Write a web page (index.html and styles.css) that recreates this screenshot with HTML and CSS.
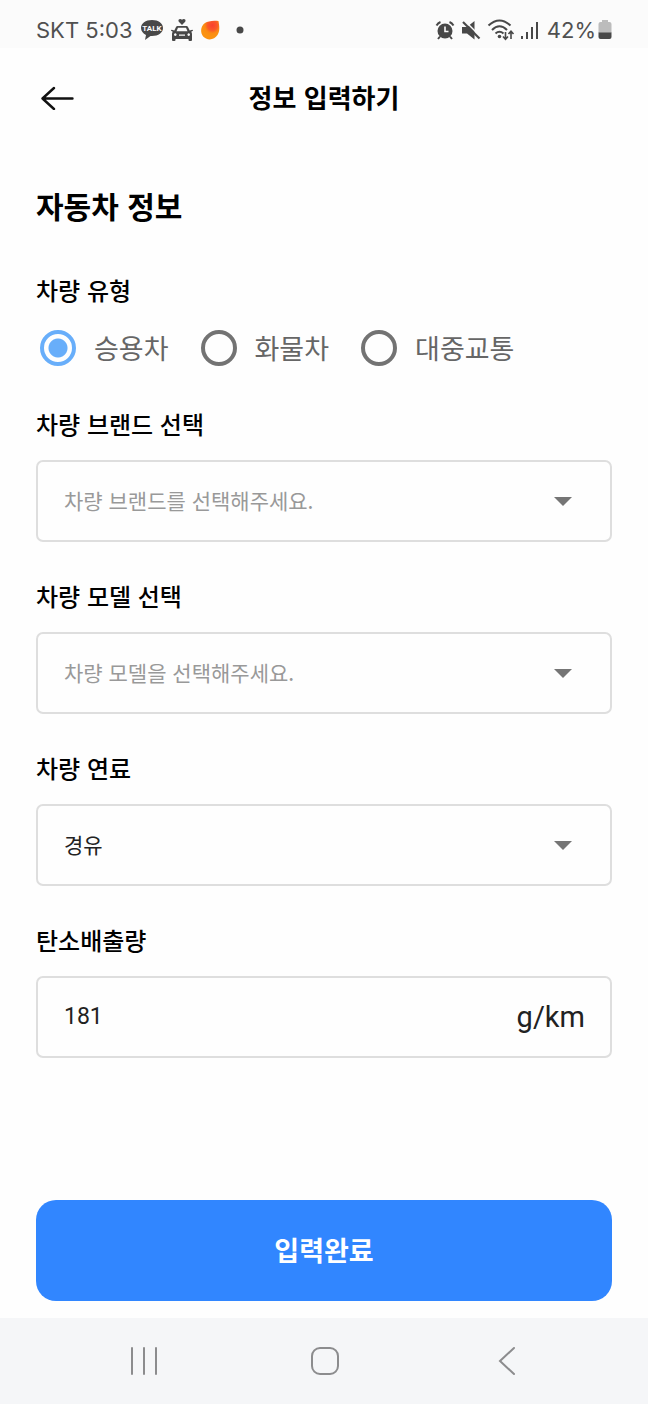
FILE: index.html
```html
<!DOCTYPE html>
<html lang="ko">
<head>
<meta charset="utf-8">
<meta name="viewport" content="width=device-width, initial-scale=1">
<title>정보 입력하기</title>
<link rel="stylesheet" href="styles.css">
</head>
<body class="app">
<div class="status">
  <div class="status-group">
    <span class="status-text">SKT 5:03</span>
    <svg class="status-talk" width="24" height="24" viewBox="0 0 24 24" aria-hidden="true">
      <path fill="#484848" d="M12 2C5.500 2 1 5.400 1 10c0 3 2 5.500 5 6.900L5 22l5.500-4H12c6.500 0 11-3.500 11-8s-4.500-8-11-8z"/>
      <text class="talk-word" x="12" y="13" text-anchor="middle">TALK</text>
    </svg>
    <svg width="24" height="24" viewBox="0 0 24 24" aria-hidden="true">
      <path fill="#484848" d="M12 7 8.800 3.800C7.500 2 9.900 0 12 1.800 14.100 0 16.500 2 15.200 3.800z"/>
      <path fill="#484848" fill-rule="evenodd" d="M7.500 8h9q1 0 1.500 1l1.700 3.500 2.500-.8q.8 0 .8 1l-1.800 1.100q.8.900.8 2.200v6q0 1-1 1h-1.500q-1 0-1-1v-1h-13v1q0 1-1 1H3q-1 0-1-1v-6q0-1.300.8-2.200L1 12.700q0-1 .8-1l2.500.8L6 9q.500-1 1.500-1zM8 9.700 6.500 13.200h11L16 9.700zM5.300 15.300a1.300 1.300 0 1 0 .01 0zM18.700 15.300a1.300 1.300 0 1 0 .01 0zM9 16.500v1.300h6v-1.300z"/>
    </svg>
    <svg class="status-peach" width="20" height="22" viewBox="0 0 20 22" aria-hidden="true">
      <defs>
        <radialGradient id="peach" cx="0.620" cy="0.250" r="0.600">
          <stop offset="0" stop-color="#f9402f"/>
          <stop offset="0.450" stop-color="#fa5a28"/>
          <stop offset="0.700" stop-color="#fb8a12"/>
          <stop offset="1" stop-color="#fb9210"/>
        </radialGradient>
      </defs>
      <path fill="url(#peach)" d="M9 2.500c3-1 6-1 9.500-.5C19.500 8 20 12 17.500 16 15 20 10 21.500 6 19.500 1.500 17.500 0 12 2 7.500 3.500 4.500 6 3 9 2.500z"/>
    </svg>
    <svg width="8" height="8" viewBox="0 0 8 8" aria-hidden="true"><circle cx="4" cy="4" r="3.500" fill="#484848"/></svg>
  </div>
  <div class="status-group">
    <svg width="20" height="20" viewBox="0 0 20 20" fill="none" stroke="#484848" stroke-width="2" aria-hidden="true">
      <circle cx="10" cy="11" r="7.500" fill="#484848" stroke="none"/>
      <path d="M1.500 5.500Q3 3 5.500 2M18.500 5.500Q17 3 14.500 2M5 16.500 3 19M15 16.500l2 2.500"/>
      <path stroke="#fcfcfc" stroke-width="1.600" d="M10 6.500v5h3.500"/>
    </svg>
    <svg width="20" height="20" viewBox="0 0 20 20" aria-hidden="true">
      <path fill="#484848" d="M1 7h5l7.500-6v18.500L6 13.500H1z"/>
      <path stroke="#fcfcfc" stroke-width="1.500" d="M4 1 19.500 16.500"/>
      <path stroke="#484848" stroke-width="2.200" d="M2 2l16.500 16.500"/>
    </svg>
    <svg width="28" height="24" viewBox="0 0 28 24" fill="none" stroke="#484848" stroke-width="2" aria-hidden="true">
      <path d="M1.500 7.500Q12.500-2.500 23.500 7.500M5 12Q12.500 4.500 20 12M8.500 15.500q4-3.500 8 0"/>
      <circle cx="12.500" cy="18.500" r="1.800" fill="#484848" stroke="none"/>
      <path stroke-width="1.600" d="M18.500 14v7M16 18.500l2.500 2.800 2.500-2.800M24 21v-7.500M21.500 16l2.500-2.800 2.500 2.800"/>
    </svg>
    <svg class="status-signal" width="18" height="20" viewBox="0 0 18 20" fill="#484848" aria-hidden="true">
      <path d="M0 16h2v3H0zM5 12h2v7H5zM10 7h2v12h-2zM15 2h2v17h-2z"/>
    </svg>
    <span class="status-text">42%</span>
    <svg class="status-battery" width="14" height="20" viewBox="0 0 14 20" aria-hidden="true">
      <path fill="#bcbcbc" d="M4 0h6v2h1.500Q13.500 2 13.500 4v9H.5V4Q.5 2 2.500 2H4z"/>
      <path fill="#484848" d="M.5 12.500h13V17q0 2-2 2h-9q-2 0-2-2z"/>
    </svg>
  </div>
</div>

<header class="topbar">
  <button class="back" type="button" aria-label="뒤로">
    <svg width="36" height="24" viewBox="0 0 36 24" fill="none" stroke="#111" stroke-width="2.400" stroke-linecap="round" stroke-linejoin="round" aria-hidden="true"><path d="M32.500 12.500H2.500M14 2 2.500 12.500 14 23"/></svg>
  </button>
  <h1 class="title">정보 입력하기</h1>
</header>

<form class="form">
  <h2 class="heading">자동차 정보</h2>
  <fieldset class="types">
    <legend class="label">차량 유형</legend>
    <div class="options">
      <label class="option"><input class="radio" type="radio" name="type" checked>승용차</label>
      <label class="option"><input class="radio" type="radio" name="type">화물차</label>
      <label class="option"><input class="radio" type="radio" name="type">대중교통</label>
    </div>
  </fieldset>
  <div class="field">
    <label class="label" for="brand">차량 브랜드 선택</label>
    <div class="box">
      <select class="control placeholder" id="brand"><option>차량 브랜드를 선택해주세요.</option></select>
      <svg class="caret" width="18" height="9" viewBox="0 0 18 9" aria-hidden="true"><path fill="#757575" d="M0 0h18L9 9z"/></svg>
    </div>
  </div>
  <div class="field">
    <label class="label" for="model">차량 모델 선택</label>
    <div class="box">
      <select class="control placeholder" id="model"><option>차량 모델을 선택해주세요.</option></select>
      <svg class="caret" width="18" height="9" viewBox="0 0 18 9" aria-hidden="true"><path fill="#757575" d="M0 0h18L9 9z"/></svg>
    </div>
  </div>
  <div class="field">
    <label class="label" for="fuel">차량 연료</label>
    <div class="box">
      <select class="control" id="fuel"><option>경유</option></select>
      <svg class="caret" width="18" height="9" viewBox="0 0 18 9" aria-hidden="true"><path fill="#757575" d="M0 0h18L9 9z"/></svg>
    </div>
  </div>
  <div class="field">
    <label class="label" for="carbon">탄소배출량</label>
    <div class="box">
      <input class="control number" id="carbon" type="text" inputmode="numeric" value="181">
      <span class="unit">g/km</span>
    </div>
  </div>
  <button class="submit" type="submit">입력완료</button>
</form>

<nav class="navbar">
  <button class="nav-button" type="button" aria-label="최근 앱">
    <svg width="32" height="32" viewBox="0 0 32 32" stroke="#8c8c8e" stroke-width="2" stroke-linecap="round" aria-hidden="true"><path d="M5 3v26M17 3v26M29 3v26"/></svg>
  </button>
  <button class="nav-button" type="button" aria-label="홈">
    <svg width="32" height="32" viewBox="0 0 32 32" fill="none" stroke="#8c8c8e" stroke-width="2" aria-hidden="true"><rect x="4" y="3" width="26" height="26" rx="8"/></svg>
  </button>
  <button class="nav-button" type="button" aria-label="이전">
    <svg width="32" height="32" viewBox="0 0 32 32" fill="none" stroke="#8c8c8e" stroke-width="2" stroke-linecap="round" aria-hidden="true"><path d="M25 3 11 16l14 13"/></svg>
  </button>
</nav>
</body>
</html>
```
FILE: styles.css
```css
* {
  box-sizing: border-box;
}

.app {
  margin: 0;
  min-height: 100vh;
  display: flex;
  flex-direction: column;
  background: #fefefe;
  color: #000;
  font-family: "Noto Sans CJK KR", "Noto Sans", sans-serif;
}

button,
select,
input {
  font-family: inherit;
}

button {
  padding: 0;
  border: 0;
  background: none;
}

svg {
  display: block;
  flex: none;
}

.status {
  height: 48px;
  padding: 12px 36px 0;
  display: flex;
  justify-content: space-between;
  align-items: flex-start;
  background: #fbfbfb;
}

.status-group {
  display: flex;
  align-items: center;
  gap: 6px;
  height: 36px;
}

.status-text {
  color: #505050;
  font: 22px/36px Inter, sans-serif;
}

.status-talk {
  margin-left: 2px;
}

.talk-word {
  fill: #fcfcfc;
  font: bold 8px Roboto, sans-serif;
}

.status-peach {
  margin-right: 10px;
}

.status-signal {
  margin-right: 2px;
}

.status-battery {
  margin-left: -4px;
}

.topbar {
  height: 100px;
  padding: 0 36px;
  display: grid;
  grid-template-columns: 1fr auto 1fr;
  align-items: center;
}

.back {
  justify-self: start;
  padding: 4px;
}

.title {
  margin: 0;
  padding-bottom: 2px;
  font-size: 26px;
  line-height: 36px;
  font-weight: 700;
}

.form {
  flex: 1;
  padding: 36px 36px 17px;
  display: flex;
  flex-direction: column;
  gap: 36px;
}

.heading {
  margin: 0 0 10px;
  font-size: 30px;
  line-height: 42px;
  font-weight: 700;
}

.label {
  display: block;
  padding: 0;
  font-size: 24px;
  line-height: 36px;
  font-weight: 500;
}

.types {
  margin: 0;
  padding: 0;
  border: 0;
}

.options {
  display: flex;
  gap: 32px;
  padding: 20px 4px 2px;
}

.option {
  display: flex;
  align-items: center;
  gap: 18px;
  color: #666;
  font-size: 27px;
  line-height: 40px;
}

.radio {
  appearance: none;
  width: 36px;
  height: 36px;
  margin: 0;
  border: 4px solid #737373;
  border-radius: 50%;
}

.radio:checked {
  border-color: #68aefa;
  background: radial-gradient(circle, #68aefa 9px, transparent 10px);
}

.field {
  display: flex;
  flex-direction: column;
  gap: 18px;
}

.box {
  display: grid;
  align-items: center;
}

.control {
  grid-area: 1 / 1;
  appearance: none;
  width: 100%;
  height: 82px;
  margin: 0;
  padding: 0 64px 2px 26px;
  border: 2px solid #dedede;
  border-radius: 7px;
  background: transparent;
  color: #222;
  font-size: 21px;
}

.placeholder {
  color: #999;
}

.number {
  font-family: Roboto, sans-serif;
  font-size: 23px;
}

.caret,
.unit {
  grid-area: 1 / 1;
  justify-self: end;
  pointer-events: none;
}

.caret {
  margin-right: 40px;
}

.unit {
  margin-right: 27px;
  color: #222;
  font: 29px/40px Roboto, sans-serif;
}

.submit {
  height: 101px;
  margin-top: auto;
  padding-bottom: 2px;
  border-radius: 20px;
  background: #3186ff;
  color: #fff;
  font-size: 27px;
  font-weight: 700;
}

.navbar {
  height: 86px;
  padding: 0 52px;
  display: grid;
  grid-template-columns: repeat(3, 1fr);
  background: #f5f6f8;
}

.nav-button {
  display: grid;
  place-items: center;
}
```
